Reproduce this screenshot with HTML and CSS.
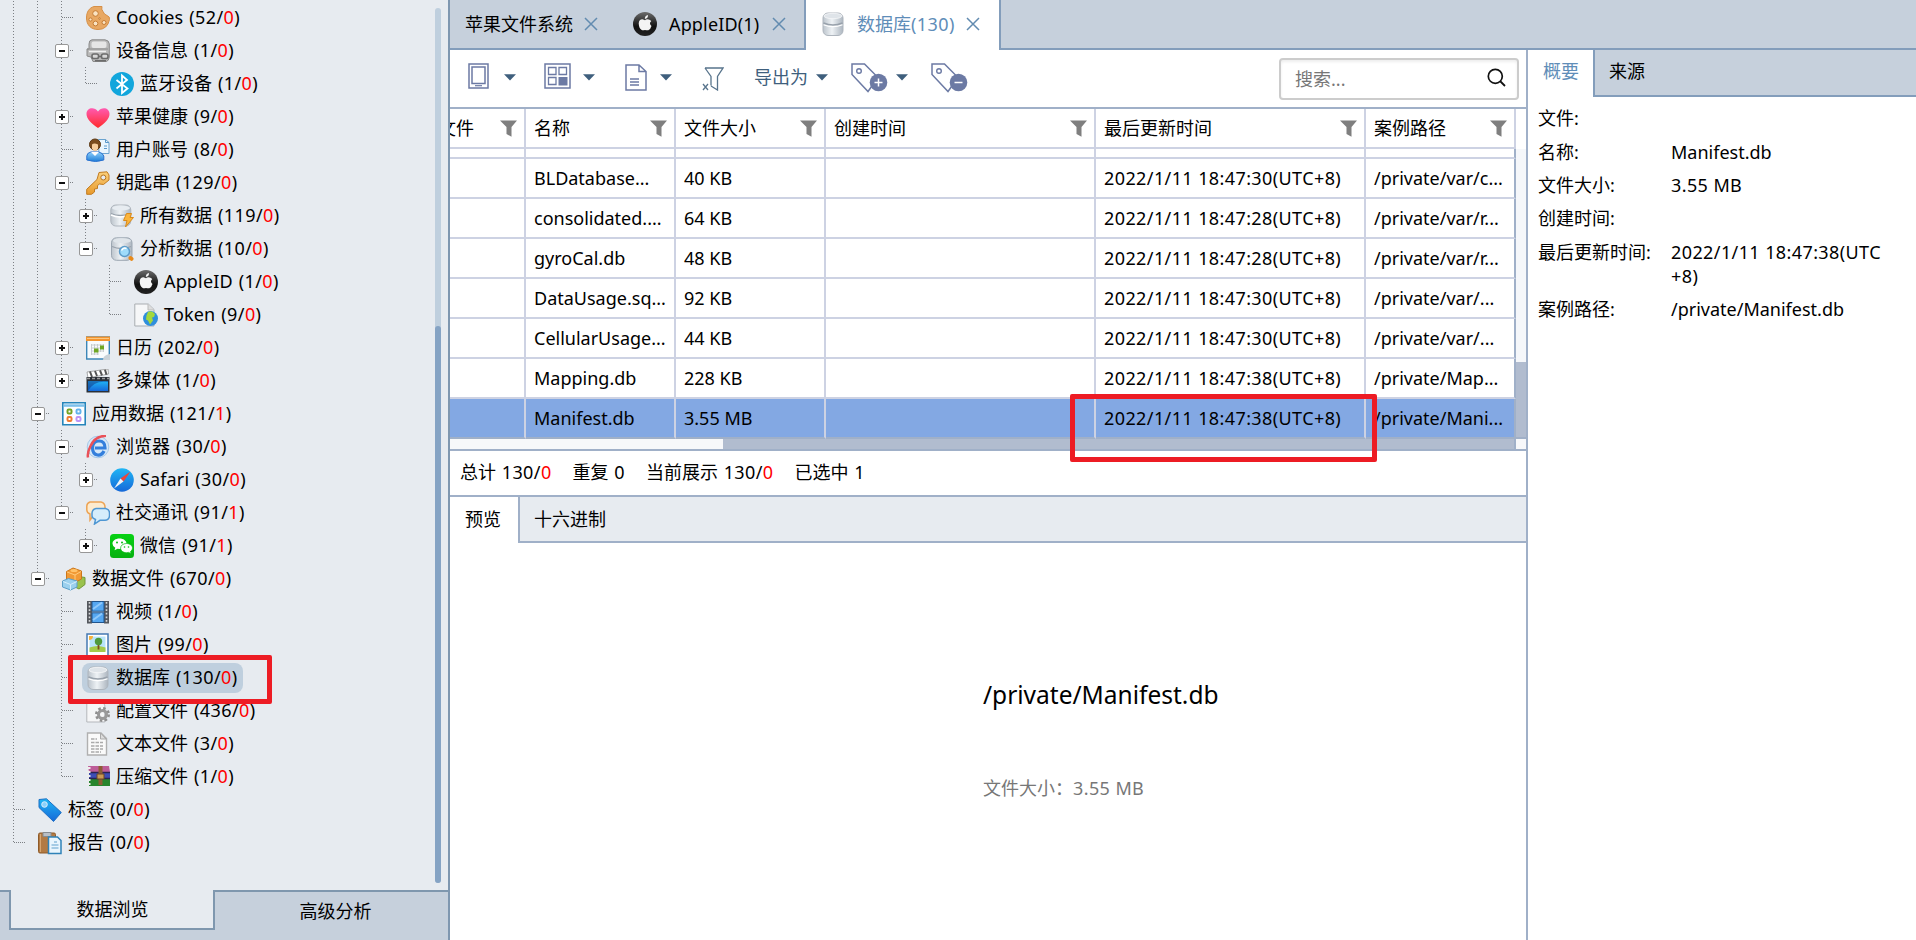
FILE: index.html
```
<!DOCTYPE html>
<html lang="zh-CN">
<head>
<meta charset="utf-8">
<title>数据库</title>
<link rel="stylesheet" href="styles.css">
</head>
<body>
<svg class="defs" aria-hidden="true">
  <defs>
    <linearGradient id="gs" x1="0" x2="1" y1="0" y2="0"><stop offset="0" stop-color="#bcc4cc"/><stop offset=".45" stop-color="#eef2f5"/><stop offset="1" stop-color="#adb6c0"/></linearGradient>
    <linearGradient id="gk" x1="0" x2="0" y1="0" y2="1"><stop offset="0" stop-color="#6d6d6d"/><stop offset=".6" stop-color="#111"/><stop offset="1" stop-color="#222"/></linearGradient>
    <linearGradient id="gh" x1="0" x2="0" y1="0" y2="1"><stop offset="0" stop-color="#ff5ab0"/><stop offset="1" stop-color="#ff2a2a"/></linearGradient>
    <linearGradient id="gb" x1="0" x2="0" y1="0" y2="1"><stop offset="0" stop-color="#8fd0fb"/><stop offset="1" stop-color="#1f7fd8"/></linearGradient>
    <linearGradient id="gbl" x1="0" x2="0" y1="0" y2="1"><stop offset="0" stop-color="#20b6f5"/><stop offset="1" stop-color="#1668d8"/></linearGradient>
    <linearGradient id="go" x1="0" x2="0" y1="0" y2="1"><stop offset="0" stop-color="#fbd07c"/><stop offset="1" stop-color="#e89a2c"/></linearGradient>
    <linearGradient id="gg" x1="0" x2="0" y1="0" y2="1"><stop offset="0" stop-color="#06d213"/><stop offset="1" stop-color="#07b010"/></linearGradient>
  </defs>
  <symbol id="cookie" viewBox="0 0 24 24"><path d="M8 .5h8q-1 3 1 5 1 3 4 4 3 1 2.500 4Q21.500 23.500 12 23.500C5 23.500 .5 19 .5 12 .5 6 3 2 8 .5z" fill="#e8a863" stroke="#d58f47"/><g fill="#fae3c2" stroke="#c57c35"><circle cx="9.500" cy="7.500" r="2.800"/><circle cx="4.500" cy="13.500" r="1.600"/><circle cx="9.500" cy="17.500" r="2.400"/><circle cx="18" cy="16.500" r="2"/><circle cx="13.500" cy="12.500" r=".8"/></g></symbol>
  <symbol id="device" viewBox="0 0 24 24"><path d="M6 .8h13q4 .5 4.300 4V18q-.5 4-3 4.500H7L5 18l-4-1V10h2V5q0-4 3-4.200z" fill="#b9b9b9" stroke="#8a8a8a"/><rect x="5.500" y="2.500" width="15" height="6.500" rx="2" fill="#e6e6e6"/><path d="M1 10h21" stroke="#8e8e8e"/><path d="M3 12.500h17" stroke="#efefef" stroke-width="1.500"/><g fill="#d8d8d8" stroke="#6c6c6c" stroke-width="1.600"><rect x="6" y="15" width="6.500" height="4.500" rx="1.800"/><rect x="15.500" y="15" width="6.500" height="4.500" rx="1.800"/><path d="M12 17.500h4M9 21.800h11"/></g></symbol>
  <symbol id="bluetooth" viewBox="0 0 24 24"><circle cx="12" cy="12" r="12" fill="#12a6dc"/><path d="M6.500 8l11 8.500-5.500 4.500V3.500l5 4.500-10.500 8.500" fill="none" stroke="#fff" stroke-width="1.800"/></symbol>
  <symbol id="heart" viewBox="0 0 24 24"><path d="M12 23C5 18 .5 14 .5 9 .5 2.500 8.500 1.500 12 6.500 15.500 1.500 23.500 2.500 23.500 9c0 5-4.500 9-11.500 14z" fill="url(#gh)"/></symbol>
  <symbol id="user" viewBox="0 0 24 24"><path d="M12.500 1.500h7l3.500 3v11h-10z" fill="#e9f5fe" stroke="#6aa3cf"/><path d="M19.500 1.500v3H23M18 8h3M18 10.500h3" fill="none" stroke="#5b98ca"/><path d="M.8 22v-4q0-3 4-4h8q4 1 5 4v4q-8 3-17 0z" fill="url(#gb)" stroke="#2a71cf"/><path d="M5 14h8l-4 4z" fill="#fff"/><circle cx="9" cy="6.500" r="5.500" fill="#7b4d1d" stroke="#5b3712"/><path d="M6 6.500q2-2 6 0v4q-3 5-6 0z" fill="#f6ce9b"/></symbol>
  <symbol id="key" viewBox="0 0 24 24"><path d="M13 1.500L21 .8 23 4v5l-5.500 4.500-4-.5-2 1.500v3l-3 .5v3L5.500 23.300H.7v-5L11 8.500z" fill="url(#go)" stroke="#c17b21"/><circle cx="17.300" cy="6.500" r="2.500" fill="#e7ebf0" stroke="#b57420"/></symbol>
  <symbol id="db" viewBox="0 0 24 24"><rect x="2" y="1" width="20" height="22.500" rx="5" fill="url(#gs)" stroke="#aeb5bd"/><ellipse cx="12" cy="4" rx="9" ry="2.700" fill="#dfe4e9" stroke="#fff" stroke-width=".6"/><path d="M2.500 11q9.500 4 19 0" fill="none" stroke="#98a1ab" stroke-width="1.500"/><path d="M2.500 12.700q9.500 4 19 0" fill="none" stroke="#fff" stroke-width="1.200"/></symbol>
  <symbol id="dbflash" viewBox="0 0 24 24"><rect x=".8" y="1" width="20" height="21" rx="5" fill="url(#gs)" stroke="#aeb5bd"/><ellipse cx="11" cy="4" rx="9" ry="2.600" fill="#e7ecf1"/><path d="M1 9.500q9 4 19 0" fill="none" stroke="#98a1ab" stroke-width="1.300"/><path d="M1 11q9 4 19 0" fill="none" stroke="#fff" stroke-width="1.500"/><path d="M16.500 9.500h5l-1.500 4h3.500L15.500 23l1.500-6.500h-3.500z" fill="#fbb53c" stroke="#d98a1b"/></symbol>
  <symbol id="dbfind" viewBox="0 0 24 24"><rect x="1.500" y=".8" width="20.500" height="22.500" rx="5" fill="url(#gs)" stroke="#9ba6b1"/><ellipse cx="12" cy="3.800" rx="9" ry="2.500" fill="#dfe5ea"/><path d="M2 9.500q9 4 19 0" fill="none" stroke="#98a1ab" stroke-width="1.300"/><circle cx="14.500" cy="14.500" r="5" fill="#9fdcfb" stroke="#5d9cc9" stroke-width="1.500"/><path d="M11.500 13.500q2-3.500 5-2" stroke="#fff" stroke-width="1.500" fill="none"/><path d="M20.500 21l1 .8" stroke="#e88a1a" stroke-width="4" stroke-linecap="round"/></symbol>
  <symbol id="apple" viewBox="0 0 24 24"><circle cx="12" cy="12" r="12" fill="url(#gk)"/><path d="M12 8.200q2-1.700 5-.2 1.200.8 1.200 1.300-2.600 2 .3 4.700-1 3.500-3.200 4.200-1.700.4-3.300-.3-2 .8-3.300.2Q6 16.500 5.700 11.500 6 7.300 9.500 7.300z" fill="#f4f4f4"/><path d="M11.800 7q0-3.300 3.200-4 .2 3.500-3.200 4z" fill="#f4f4f4"/></symbol>
  <symbol id="token" viewBox="0 0 24 24"><path d="M.8 1h13.500L20 6.500V23H.8z" fill="#f6f7f8" stroke="#a9adb1"/><path d="M14 1v6h6" fill="#ddd" stroke="#bbb"/><circle cx="16.500" cy="15.500" r="7.500" fill="#2f8fdc"/><path d="M14 9q4-2 7 2l-1 3-2 .5 1 3-3 4-2-4-2-1 .5-4z" fill="#a4d83c"/></symbol>
  <symbol id="calendar" viewBox="0 0 24 24"><path d="M.7 1h22.600v22H.7z" fill="#f9fbfd" stroke="#3d87b8" stroke-width="1.400"/><path d="M0 .5h24V5H0z" fill="#f4942e"/><path d="M1 2.500h22" stroke="#fbc77f"/><path d="M5 9h13M5 12h13M5 15h13M5 18h8M5.500 8v11M8.500 8v11M11.500 8v11M14.500 8v8M17.500 8v8" stroke="#c4c8cc" stroke-width=".9"/><path d="M14 9.500h4v4h-4zM8 12.500h4.500v4H8z" fill="#6fa724"/><path d="M17 24q0-5 7-6v6z" fill="#cbd2d8"/></symbol>
  <symbol id="media" viewBox="0 0 24 24"><path d="M1 3l21-3 .5 5L2 9z" fill="#fff" stroke="#888" stroke-width=".7"/><path d="M4 2.500L6 8M9 2l2 5M14 1.300l2 5M19 .8l1.500 5" stroke="#555" stroke-width="2"/><path d="M.5 8h23v15.500H.5z" fill="#2b3038"/><path d="M1 9.500h22" stroke="#999" stroke-dasharray="3 2" stroke-width="1.500"/><path d="M2 12h20v10H2z" fill="url(#gbl)"/><path d="M2 22q6-11 20-9v-1H2z" fill="#123a86" opacity=".55"/></symbol>
  <symbol id="apps" viewBox="0 0 24 24"><path d="M.8.8h22.400v22H.8z" fill="#fdfeff" stroke="#2685bb" stroke-width="1.600"/><path d="M2 2.300h20v2.500H2z" fill="#7cc0ec"/><g fill="none" stroke-width="2"><rect x="5.500" y="7.500" width="4" height="4" rx="1.200" stroke="#75a324"/><rect x="14.500" y="7.500" width="4" height="4" rx="1.200" stroke="#62b3ec"/><rect x="5.500" y="15" width="4" height="4" rx="1.200" stroke="#f17b32"/><rect x="14.500" y="15" width="4" height="4" rx="1.200" stroke="#bd93f5"/></g></symbol>
  <symbol id="browser" viewBox="0 0 24 24"><circle cx="12" cy="12" r="10.800" fill="#d6e8f8" stroke="#a6c8e8"/><path d="M18 16q-2 4.500-6.500 4-5-.8-5-7.500.5-6.500 6.500-6.500t6 7H9" fill="none" stroke="#347fdc" stroke-width="3.200"/><path d="M20 .8Q9 1 4.500 11 1 18 2 22.500" fill="none" stroke="#ea5158" stroke-width="2.500"/></symbol>
  <symbol id="safari" viewBox="0 0 24 24"><circle cx="12" cy="12" r="11.800" fill="url(#gbl)"/><path d="M20.500 3.500L13.500 13.500 10.500 10.500z" fill="#f04438"/><path d="M10.500 10.500l3 3L4 20.500z" fill="#eef3f8"/></symbol>
  <symbol id="chat" viewBox="0 0 24 24"><path d="M4 1h11q4 1 4 5v4q-1 4-5 4H8l-4 5v-6Q1 12 .8 9V5Q1 2 4 1z" fill="#fdebcf" stroke="#eda455" stroke-width="1.500"/><path d="M10 7.500h9.500q4 1 4 4.500v3q-.5 4-4.500 4.300h-5L8.500 23l1-4.500Q6 17 6 15v-3q.5-4 4-4.500z" fill="#d5edfc" stroke="#4f97d3" stroke-width="1.500"/></symbol>
  <symbol id="wechat" viewBox="0 0 24 24"><rect width="24" height="24" rx="3.500" fill="url(#gg)"/><path d="M9.500 4.500c4 0 7 2.300 7 5s-3 5.500-7 5.500l-2-.3-3 1.500.8-2.500Q2.500 12 2.500 9.700c0-3 3-5.200 7-5.200z" fill="#fff"/><path d="M16.500 9.500c3.400 0 6 2.200 6 4.600q0 2-2 3.500l.6 2-2.500-1.200-2 .3c-3.500 0-6-2-6-4.600s2.500-4.600 5.900-4.600z" fill="#fff" stroke="#08bd12" stroke-width=".7"/><g fill="#08bd12"><circle cx="7" cy="8.500" r="1"/><circle cx="12" cy="8.500" r="1"/><circle cx="14.500" cy="13" r=".8"/><circle cx="18.500" cy="13" r=".8"/></g></symbol>
  <symbol id="blocks" viewBox="0 0 24 24"><path d="M14 9l9 1.500v7L17 22l-6-3z" fill="#9ac24d" stroke="#74983a"/><path d="M4.500 4.500L11 1l8.500 3v8L13 15.500 4.500 12z" fill="#f19a35" stroke="#cc771b"/><path d="M5 5l8 3 6-3.500M13 8v7" fill="none" stroke="#ffcb7d"/><ellipse cx="12" cy="3.500" rx="3.500" ry="1.500" fill="#ffc36a"/><path d="M.5 14l6-2.500L15 14v6l-6.500 3L.5 20z" fill="#9bd0ee" stroke="#5b9fc9"/><path d="M1 14.500l7.500 3L15 14.500M8.500 17.500V23" fill="none" stroke="#d6effc"/></symbol>
  <symbol id="film" viewBox="0 0 24 24"><path d="M1 1h5v22.500H1zM18 1h5v22.500h-5z" fill="#55585e"/><path d="M3.500 2v21M20.500 2v21" stroke="#d4d6d9" stroke-width="1.600" stroke-dasharray="1.800 1.800"/><path d="M6 1.500h12v9.700H6zM6 12.800h12v9.700H6z" fill="#55a7f1" stroke="#20548c"/><path d="M7 9L16 2.500M7 20l9-6.500" stroke="#8fc9fb" stroke-width="2"/></symbol>
  <symbol id="image" viewBox="0 0 24 24"><path d="M1 1h21v22H1z" fill="#fff" stroke="#4679b2" stroke-width="1.500"/><path d="M3.500 3.500h16V18h-16z" fill="#b8e4fa"/><path d="M3.500 14.500q8-3 16 0V19h-16z" fill="#a4cb4a"/><path d="M12.500 10v6.500" stroke="#7b4d1d" stroke-width="1.800"/><circle cx="12.500" cy="8.500" r="3.700" fill="#4f9a3c"/><path d="M3 3h4q0 4-4 4z" fill="#f6b23c"/></symbol>
  <symbol id="config" viewBox="0 0 24 24"><path d="M.8 1h13l5 5v17H.8z" fill="#f5f6f7" stroke="#b4b7bb"/><circle cx="16.500" cy="15.500" r="6" fill="none" stroke="#8e8e8e" stroke-width="3" stroke-dasharray="2.400 2.300"/><circle cx="16.500" cy="15.500" r="4" fill="none" stroke="#999" stroke-width="3"/></symbol>
  <symbol id="text" viewBox="0 0 24 24"><path d="M1.500 1h13.500l5.500 5.500V23h-19z" fill="#fafafa" stroke="#b0b0b0" stroke-width="1.400"/><path d="M14.500 1v6H20z" fill="#ddd" stroke="#aaa"/><path d="M5 7h6M5 10.500h12M5 14h12M5 17h12M5 20h10" stroke="#aaa" stroke-width="1.300" stroke-dasharray="3.500 1"/></symbol>
  <symbol id="rar" viewBox="0 0 24 24"><path d="M2 1h21l1 6H3z" fill="#bd5c98"/><path d="M3 7h21v6H3z" fill="#3d4db5"/><path d="M3 13h21v8H3z" fill="#27852d"/><path d="M3 7.500h21M3 13.500h21" stroke="#2a2352" stroke-width="1.300"/><path d="M2.500 2v19" stroke="#ededed" stroke-width="4" stroke-dasharray="2 2"/><path d="M14.500 1v19" stroke="#8c5c35" stroke-width="4"/><path d="M11 9h7v5h-7z" fill="#c99a54" stroke="#6c4527"/></symbol>
  <symbol id="tag" viewBox="0 0 24 24"><path d="M1 1.500L8.500.8 23.300 14.500 15.500 23.500 1 9.500z" fill="url(#gbl)" stroke="#1d6fc4"/><circle cx="6.500" cy="6.500" r="2.800" fill="#8bd1fa" stroke="#d8effc"/></symbol>
  <symbol id="report" viewBox="0 0 24 24"><rect x=".5" y="2" width="17" height="20" rx="1.500" fill="#b27a43" stroke="#8e5a29"/><path d="M5 1.500h8v4H5z" fill="#b9bfc5" stroke="#858b91"/><path d="M2.500 3v18" stroke="#d6a672"/><path d="M10.500 6h9l3.500 3.500v13H10.500z" fill="#e9f5fd" stroke="#2f82b8" stroke-width="1.500"/><path d="M16 11h3M13.500 14h7M13.500 17h7" stroke="#8fbddd" stroke-width="1.300"/></symbol>
  <symbol id="funnel" viewBox="0 0 17 17"><path d="M0 .5h17L11.500 7v9.800L6.500 14V7z" fill="#7f7f7f"/></symbol>
  <symbol id="x" viewBox="0 0 14 14"><path d="M1 1l12 12M13 1L1 13" fill="none" stroke="#628bb0" stroke-width="1.500"/></symbol>
  <symbol id="caret" viewBox="0 0 12 7"><path d="M0 .3h12L6 6.500z" fill="#3f5f7d"/></symbol>
</svg>

<div class="app">
  <aside class="side">
    <div class="scrollarea">
      <div class="tree">
        <div class="row"><i class="g v"></i><i class="g v"></i><i class="g v h"></i><svg class="ic"><use href="#cookie"/></svg><span class="nm"><span class="l">Cookies</span></span><span class="ct">(52/<b>0</b>)</span></div>
        <div class="row"><i class="g v"></i><i class="g v"></i><i class="g v h"><em class="box"></em></i><svg class="ic"><use href="#device"/></svg><span class="nm">设备信息</span><span class="ct">(1/<b>0</b>)</span></div>
        <div class="row"><i class="g v"></i><i class="g v"></i><i class="g v"></i><i class="g e h"></i><svg class="ic"><use href="#bluetooth"/></svg><span class="nm">蓝牙设备</span><span class="ct">(1/<b>0</b>)</span></div>
        <div class="row"><i class="g v"></i><i class="g v"></i><i class="g v h"><em class="box plus"></em></i><svg class="ic"><use href="#heart"/></svg><span class="nm">苹果健康</span><span class="ct">(9/<b>0</b>)</span></div>
        <div class="row"><i class="g v"></i><i class="g v"></i><i class="g v h"></i><svg class="ic"><use href="#user"/></svg><span class="nm">用户账号</span><span class="ct">(8/<b>0</b>)</span></div>
        <div class="row"><i class="g v"></i><i class="g v"></i><i class="g v h"><em class="box"></em></i><svg class="ic"><use href="#key"/></svg><span class="nm">钥匙串</span><span class="ct">(129/<b>0</b>)</span></div>
        <div class="row"><i class="g v"></i><i class="g v"></i><i class="g v"></i><i class="g v h"><em class="box plus"></em></i><svg class="ic"><use href="#dbflash"/></svg><span class="nm">所有数据</span><span class="ct">(119/<b>0</b>)</span></div>
        <div class="row"><i class="g v"></i><i class="g v"></i><i class="g v"></i><i class="g e h"><em class="box"></em></i><svg class="ic"><use href="#dbfind"/></svg><span class="nm">分析数据</span><span class="ct">(10/<b>0</b>)</span></div>
        <div class="row"><i class="g v"></i><i class="g v"></i><i class="g v"></i><i class="g"></i><i class="g v h"></i><svg class="ic"><use href="#apple"/></svg><span class="nm"><span class="l">AppleID</span></span><span class="ct">(1/<b>0</b>)</span></div>
        <div class="row"><i class="g v"></i><i class="g v"></i><i class="g v"></i><i class="g"></i><i class="g e h"></i><svg class="ic"><use href="#token"/></svg><span class="nm"><span class="l">Token</span></span><span class="ct">(9/<b>0</b>)</span></div>
        <div class="row"><i class="g v"></i><i class="g v"></i><i class="g v h"><em class="box plus"></em></i><svg class="ic"><use href="#calendar"/></svg><span class="nm">日历</span><span class="ct">(202/<b>0</b>)</span></div>
        <div class="row"><i class="g v"></i><i class="g v"></i><i class="g e h"><em class="box plus"></em></i><svg class="ic"><use href="#media"/></svg><span class="nm">多媒体</span><span class="ct">(1/<b>0</b>)</span></div>
        <div class="row"><i class="g v"></i><i class="g v h"><em class="box"></em></i><svg class="ic"><use href="#apps"/></svg><span class="nm">应用数据</span><span class="ct">(121/<b>1</b>)</span></div>
        <div class="row"><i class="g v"></i><i class="g v"></i><i class="g v h"><em class="box"></em></i><svg class="ic"><use href="#browser"/></svg><span class="nm">浏览器</span><span class="ct">(30/<b>0</b>)</span></div>
        <div class="row"><i class="g v"></i><i class="g v"></i><i class="g v"></i><i class="g e h"><em class="box plus"></em></i><svg class="ic"><use href="#safari"/></svg><span class="nm"><span class="l">Safari</span></span><span class="ct">(30/<b>0</b>)</span></div>
        <div class="row"><i class="g v"></i><i class="g v"></i><i class="g e h"><em class="box"></em></i><svg class="ic"><use href="#chat"/></svg><span class="nm">社交通讯</span><span class="ct">(91/<b>1</b>)</span></div>
        <div class="row"><i class="g v"></i><i class="g v"></i><i class="g"></i><i class="g e h"><em class="box plus"></em></i><svg class="ic"><use href="#wechat"/></svg><span class="nm">微信</span><span class="ct">(91/<b>1</b>)</span></div>
        <div class="row"><i class="g v"></i><i class="g e h"><em class="box"></em></i><svg class="ic"><use href="#blocks"/></svg><span class="nm">数据文件</span><span class="ct">(670/<b>0</b>)</span></div>
        <div class="row"><i class="g v"></i><i class="g"></i><i class="g v h"></i><svg class="ic"><use href="#film"/></svg><span class="nm">视频</span><span class="ct">(1/<b>0</b>)</span></div>
        <div class="row"><i class="g v"></i><i class="g"></i><i class="g v h"></i><svg class="ic"><use href="#image"/></svg><span class="nm">图片</span><span class="ct">(99/<b>0</b>)</span></div>
        <div class="row"><i class="g v"></i><i class="g"></i><i class="g v h"></i><span class="picked"><svg class="ic"><use href="#db"/></svg><span class="nm">数据库</span><span class="ct">(130/<b>0</b>)</span></span></div>
        <div class="row"><i class="g v"></i><i class="g"></i><i class="g v h"></i><svg class="ic"><use href="#config"/></svg><span class="nm">配置文件</span><span class="ct">(436/<b>0</b>)</span></div>
        <div class="row"><i class="g v"></i><i class="g"></i><i class="g v h"></i><svg class="ic"><use href="#text"/></svg><span class="nm">文本文件</span><span class="ct">(3/<b>0</b>)</span></div>
        <div class="row"><i class="g v"></i><i class="g"></i><i class="g e h"></i><svg class="ic"><use href="#rar"/></svg><span class="nm">压缩文件</span><span class="ct">(1/<b>0</b>)</span></div>
        <div class="row"><i class="g v h"></i><svg class="ic"><use href="#tag"/></svg><span class="nm">标签</span><span class="ct">(0/<b>0</b>)</span></div>
        <div class="row"><i class="g e h"></i><svg class="ic"><use href="#report"/></svg><span class="nm">报告</span><span class="ct">(0/<b>0</b>)</span></div>
        <div class="mark mark-tree"></div>
      </div>
      <div class="vbar"><div class="vthumb"></div></div>
    </div>
    <div class="sidetabs"><div class="st-pre"></div><div class="st-on">数据浏览</div><div class="st-off">高级分析</div></div>
  </aside>

  <div class="work">
    <div class="tabs">
      <div class="tab t1">苹果文件系统<svg class="x"><use href="#x"/></svg></div>
      <div class="tab t2"><svg class="ic"><use href="#apple"/></svg><span class="l">AppleID(1)</span><svg class="x"><use href="#x"/></svg></div>
      <div class="tab on"><svg class="ic"><use href="#db"/></svg><span>数据库<span class="n">(130)</span></span><svg class="x"><use href="#x"/></svg></div>
      <div class="fill"></div>
    </div>
    <div class="body">
      <main class="main">
        <div class="toolbar">
          <svg class="t-phone" viewBox="0 0 21 26"><path d="M1 1h19v24H1zM4 4h13v16.500H4z" fill="none" stroke="#6c7aa4" stroke-width="1.500"/><path d="M7 22.700h7" stroke="#6c7aa4" stroke-width="1.200"/></svg>
          <svg class="caret c1"><use href="#caret"/></svg>
          <svg class="t-grid" viewBox="0 0 27 26"><path d="M1 1h25v24H1z" fill="none" stroke="#6c7aa4" stroke-width="1.500"/><path d="M4.500 4.500h7.500v7H4.500zM15 4.500h7.500v7H15zM4.500 14.500h7.500v7H4.500z" fill="none" stroke="#6c7aa4" stroke-width="1.300"/><path d="M14.500 14h9v8.500h-9z" fill="#6c7aa4"/></svg>
          <svg class="caret c2"><use href="#caret"/></svg>
          <svg class="t-doc" viewBox="0 0 22 27"><path d="M1 1h13l7 6.500V26H1zM14 1v6.500h7" fill="none" stroke="#6c7aa4" stroke-width="1.500"/><path d="M5 15h9M5 18h9M5 21h9" stroke="#6c7aa4" stroke-width="1.300"/></svg>
          <svg class="caret c3"><use href="#caret"/></svg>
          <svg class="t-filter" viewBox="0 0 22 24"><path d="M3 1h18l-5.500 8.500V23L9 19M3 1l6 8.500v9" fill="none" stroke="#58748c" stroke-width="1.300"/><path d="M1 17l5 6M6 17l-5 6" stroke="#58748c" stroke-width="1.300"/></svg>
          <span class="t-export">导出为</span>
          <svg class="caret c4"><use href="#caret"/></svg>
          <svg class="t-tag" viewBox="0 0 37 30"><path d="M1 1h12.500L27 14.500 17 28.500 1 11.500z" fill="none" stroke="#6c7aa4" stroke-width="1.500"/><circle cx="8" cy="8" r="2.300" fill="none" stroke="#6c7aa4" stroke-width="1.400"/><circle cx="27.500" cy="19.500" r="8.800" fill="#6c7aa4"/><path d="M23.500 19.500h8M27.500 15.500v8" stroke="#fff" stroke-width="1.500"/></svg>
          <svg class="caret c5"><use href="#caret"/></svg>
          <svg class="t-tag t-minus" viewBox="0 0 37 30"><path d="M1 1h12.500L27 14.500 17 28.500 1 11.500z" fill="none" stroke="#6c7aa4" stroke-width="1.500"/><circle cx="8" cy="8" r="2.300" fill="none" stroke="#6c7aa4" stroke-width="1.400"/><circle cx="27.500" cy="19.500" r="8.800" fill="#6c7aa4"/><path d="M23.500 19.500h8" stroke="#fff" stroke-width="1.500"/></svg>
          <div class="search"><span>搜索...</span><svg viewBox="0 0 19 19"><circle cx="8.300" cy="8.300" r="7" fill="none" stroke="#111" stroke-width="1.700"/><path d="M13 13l5 5" stroke="#111" stroke-width="1.800"/></svg></div>
        </div>
        <div class="tablebox">
          <div class="grid">
            <div class="tr th"><div class="first"><span class="clip"><span>文件</span></span><svg><use href="#funnel"/></svg></div><div>名称<svg><use href="#funnel"/></svg></div><div>文件大小<svg><use href="#funnel"/></svg></div><div>创建时间<svg><use href="#funnel"/></svg></div><div>最后更新时间<svg><use href="#funnel"/></svg></div><div>案例路径<svg><use href="#funnel"/></svg></div></div>
            <div class="tr stub"><div></div><div></div><div></div><div></div><div></div><div></div></div>
            <div class="tr"><div></div><div>BLDatabase...</div><div>40 KB</div><div></div><div class="n">2022/1/11 18:47:30(UTC+8)</div><div>/private/var/c...</div></div>
            <div class="tr"><div></div><div>consolidated....</div><div>64 KB</div><div></div><div class="n">2022/1/11 18:47:28(UTC+8)</div><div>/private/var/r...</div></div>
            <div class="tr"><div></div><div>gyroCal.db</div><div>48 KB</div><div></div><div class="n">2022/1/11 18:47:28(UTC+8)</div><div>/private/var/r...</div></div>
            <div class="tr"><div></div><div>DataUsage.sq...</div><div>92 KB</div><div></div><div class="n">2022/1/11 18:47:30(UTC+8)</div><div>/private/var/...</div></div>
            <div class="tr"><div></div><div>CellularUsage...</div><div>44 KB</div><div></div><div class="n">2022/1/11 18:47:30(UTC+8)</div><div>/private/var/...</div></div>
            <div class="tr"><div></div><div>Mapping.db</div><div>228 KB</div><div></div><div class="n">2022/1/11 18:47:38(UTC+8)</div><div>/private/Map...</div></div>
            <div class="tr sel"><div></div><div>Manifest.db</div><div>3.55 MB</div><div></div><div class="n">2022/1/11 18:47:38(UTC+8)</div><div>/private/Mani...</div></div>
            <div class="hbar"><div class="hthumb"></div></div>
          </div>
          <div class="tv"><div class="tvhead"></div><div class="tvtrack"></div><div class="tvthumb"></div><div class="tvcorner"></div></div>
          <div class="mark mark-table"></div>
        </div>
        <div class="status"><span>总计 <span class="n">130/<b>0</b></span></span><span>重复 <span class="n">0</span></span><span>当前展示 <span class="n">130/<b>0</b></span></span><span>已选中 <span class="n">1</span></span></div>
        <div class="subtabs"><div class="sub-on">预览</div><div class="sub-off">十六进制</div></div>
        <div class="preview"><div class="info"><div class="big">/private/Manifest.db</div><div class="small">文件大小：<span class="n">3.55 MB</span></div></div></div>
      </main>
      <aside class="detail">
        <div class="dtabs"><div class="d-on">概要</div><div class="d-off">来源</div></div>
        <dl>
          <dt>文件:</dt><dd></dd>
          <dt>名称:</dt><dd>Manifest.db</dd>
          <dt>文件大小:</dt><dd class="n">3.55 MB</dd>
          <dt>创建时间:</dt><dd></dd>
          <dt>最后更新时间:</dt><dd class="n">2022/1/11 18:47:38(UTC<br>+8)</dd>
          <dt>案例路径:</dt><dd>/private/Manifest.db</dd>
        </dl>
      </aside>
    </div>
  </div>
</div>
</body>
</html>
```
FILE: styles.css
```
* { box-sizing: border-box; }
body {
  margin: 0;
  width: 1916px;
  height: 940px;
  overflow: hidden;
  font-family: "Noto Sans", "Noto Sans CJK SC", sans-serif;
  font-size: 18px;
  font-weight: 400;
  line-height: 24px;
  color: #000;
  background: #fff;
}
.defs { position: absolute; width: 0; height: 0; }
svg { display: block; flex: none; }
b { font-weight: inherit; color: #f00; }
.l { letter-spacing: .15px; }
.n { letter-spacing: .4px; }
.app { display: flex; width: 1916px; height: 940px; }

.side { width: 450px; flex: none; display: flex; flex-direction: column; background: #e7ebf0; border-right: 2px solid #7f97b0; }
.scrollarea { height: 890px; display: flex; overflow: hidden; }
.tree { position: relative; width: 435px; padding: 1px 0 0 1px; }
.row { display: flex; align-items: center; height: 33px; white-space: nowrap; }
.g { position: relative; width: 24px; height: 33px; flex: none; }
.g.v, .g.e { background: repeating-linear-gradient(#7c7f84 0 1px, transparent 1px 3px) 12px 0 / 1px 33px no-repeat; }
.g.e { background-size: 1px 17px; }
.g.h::before { content: ""; position: absolute; left: 13px; top: 16px; width: 12px; height: 1px; background: repeating-linear-gradient(90deg, #7c7f84 0 1px, transparent 1px 2px); }
.box { position: absolute; left: 6px; top: 10px; width: 14px; height: 14px; border: 1.500px solid #979797; border-radius: 2px; background: #fff; }
.box::before { content: ""; position: absolute; left: 3px; right: 3px; top: 5px; height: 1.500px; background: #111; }
.box.plus::after { content: ""; position: absolute; top: 3px; bottom: 3px; left: 5px; width: 1.500px; background: #111; }
.ic { width: 24px; height: 24px; margin-left: 13px; }
.nm { margin-left: 6px; padding-bottom: 2px; }
.ct { margin-left: 6px; padding-bottom: 2px; letter-spacing: .4px; }
.picked { display: flex; align-items: center; height: 30px; margin-left: 9px; padding: 0 5px 0 4px; background: #bfcfde; border-radius: 8px; }
.picked .ic { margin-left: 0; }
.vbar { width: 6px; height: 875px; margin-top: 8px; border-radius: 3px; background: #bfcfde; display: flex; align-items: flex-end; }
.vthumb { width: 6px; height: 557px; border-radius: 3px; background: #85a3c4; }
.mark { position: absolute; border: 5px solid #ed1c24; border-radius: 2px; }
.mark-tree { left: 68px; top: 655px; width: 204px; height: 49px; }
.sidetabs { display: flex; height: 50px; background: #c6d0dc; text-align: center; }
.st-pre { width: 9px; border-top: 2px solid #7f97ae; }
.st-on { width: 206px; height: 40px; line-height: 39px; padding-left: 1px; background: #e7ebf0; border: solid #7f97ae; border-width: 0 2px 2px; }
.st-off { flex: 1; border-top: 2px solid #7f97ae; line-height: 38px; padding-left: 8px; }

.work { flex: 1; display: flex; flex-direction: column; min-width: 0; }
.tabs { display: flex; height: 50px; background: #c6d0dc; line-height: 22px; }
.tab, .fill { display: flex; align-items: center; border-bottom: 2px solid #839dbb; }
.tab .ic { margin-left: 0; }
.x { width: 14px; height: 14px; }
.t1 { width: 171px; padding-left: 15px; }
.t1 .x { margin-left: 11px; }
.t2 { width: 183px; padding-left: 12px; }
.t2 .l { width: 92px; margin: 0 11px 0 12px; }
.tab.on { width: 197px; background: #fff; border: solid #839dbb; border-width: 0 2px; color: #5f8db8; padding-left: 15px; padding-bottom: 2px; }
.tab.on > span { width: 98px; margin: 0 11px 0 12px; white-space: nowrap; }
.fill { flex: 1; }
.body { display: flex; height: 890px; }

.main { width: 1078px; flex: none; border-right: 2px solid #a0b0c8; display: flex; flex-direction: column; }
.toolbar { display: flex; align-items: center; height: 59px; padding: 0 7px 2px 18px; border-bottom: 2px solid #a0b0c8; }
.t-phone { width: 21px; height: 26px; margin-bottom: 4px; }
.t-grid { width: 27px; height: 26px; margin: 0 0 4px 28px; }
.t-doc { width: 22px; height: 27px; margin-left: 30px; }
.t-filter { width: 22px; height: 24px; margin: 3px 0 0 30px; }
.t-export { color: #3f5f7d; margin-left: 30px; margin-bottom: 1px; width: 54px; }
.t-tag { width: 37px; height: 30px; margin-left: 23px; }
.t-minus { margin-left: 23px; }
.caret { width: 12px; height: 7px; margin-left: 15px; }
.c2 { margin-left: 12px; }
.c3 { margin-left: 13px; }
.c4 { margin-left: 8px; }
.c5 { margin-left: 8px; }
.search { width: 240px; height: 42px; margin-left: auto; margin-top: 2px; border: 2px solid #ccc; border-radius: 4px; display: flex; align-items: center; justify-content: space-between; padding: 0 11px 0 14px; color: #777; box-shadow: inset 0 2px 3px #eee; }
.search svg { width: 19px; height: 19px; margin-bottom: 2px; }
.tablebox { position: relative; display: flex; height: 342px; border-bottom: 2px solid #a0b0c8; }
.grid { width: 1066px; }
.tr { display: grid; grid-template-columns: 76px 150px 150px 270px 270px 150px; height: 40px; line-height: 38px; white-space: nowrap; }
.tr > div { border: solid #cdd2e3; border-width: 0 2px 2px 0; padding-left: 8px; overflow: hidden; }
.tr:not(.th) > div:last-child { border-right-color: #a0b0c8; }
.th > div { display: flex; align-items: center; justify-content: space-between; padding-right: 7px; }
.th svg { width: 17px; height: 17px; }
.th .first { padding-left: 0; }
.clip { width: 24px; overflow: hidden; display: flex; justify-content: flex-end; }
.stub { height: 10px; }
.sel > div { background: #83a8e3; border-bottom-color: #a0b0c8; }
.hbar { height: 10px; background: #f7f8fa; display: flex; justify-content: flex-end; border-right: 2px solid #a0b0c8; }
.hthumb { width: 791px; background: #b1bccf; }
.tv { width: 10px; display: flex; flex-direction: column; }
.tvhead { height: 40px; }
.tvtrack { height: 213px; background: #f5f7fa; }
.tvthumb { height: 77px; background: #b1bccf; border-bottom: 2px solid #a0b0c8; }
.tvcorner { flex: 1; background: #f7f8fa; }
.mark-table { left: 620px; top: 285px; width: 307px; height: 68px; z-index: 1; }
.status { height: 46px; display: flex; align-items: center; gap: 21px; padding-left: 10px; padding-bottom: 2px; border-bottom: 2px solid #a0b0c8; white-space: nowrap; word-spacing: 1px; }
.subtabs { display: flex; height: 46px; line-height: 44px; }
.sub-on { width: 68px; padding-left: 15px; }
.sub-off { flex: 1; background: #e7ebf0; border: solid #a0b0c8; border-width: 0 0 2px 2px; padding-left: 14px; }
.preview { flex: 1; display: flex; padding: 134px 0 0 533px; }
.big { font-size: 24.500px; line-height: 36px; }
.small { margin-top: 63px; color: #777; line-height: 24px; }

.detail { flex: 1; }
.dtabs { display: flex; height: 47px; line-height: 43px; }
.d-on { width: 65px; padding-left: 15px; color: #5f8db8; }
.d-off { flex: 1; background: #c6d0dc; border: solid #839dbb; border-width: 0 0 2px 2px; padding-left: 14px; }
dl { display: grid; grid-template-columns: 133px 1fr; grid-template-rows: 34px 33px 33px 34px 57px 33px; margin: 9px 0 0 10px; line-height: 24px; }
dt, dd { margin: 0; }
```
